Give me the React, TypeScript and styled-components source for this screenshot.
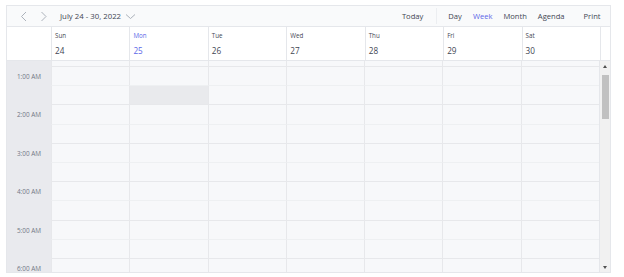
import styled, { createGlobalStyle } from "styled-components";

const GlobalStyle = createGlobalStyle`
  body {
    margin: 0;
    background: #ffffff;
    font-family: "Open Sans", "Noto Sans", sans-serif;
  }
`

const Scheduler = styled.div`
  margin: 5px 0 0 6px;
  width: 605px;
  border: 1px solid #e5e7eb;
  box-sizing: border-box;
  color: #3f4653;
`

const Toolbar = styled.div`
  height: 20px;
  display: flex;
  align-items: center;
  background: #f9fafb;
  border-bottom: 1px solid #e5e7eb;
  font-size: 7.6px;
  padding: 0 4px 0 7px;
`

const NavButton = styled.span`
  width: 20px;
  display: flex;
  justify-content: center;
  align-items: center;
  color: #a3a9b3;
`

const DateRange = styled.span`
  margin-left: 6px;
  display: flex;
  align-items: center;
  gap: 4px;
  font-size: 7.8px;
`

const DropIcon = styled.span`
  display: flex;
  color: #a3a9b3;
`

const Spacer = styled.div`
  flex: 1;
`

const ToolButton = styled.span<{ $active?: boolean; $gap?: number }>`
  padding: 0 5.5px;
  margin-left: ${props => props.$gap || 0}px;
  color: ${props => props.$active ? "#5b67e8" : "#3f4653"};
`

const Divider = styled.span`
  width: 1px;
  height: 16px;
  background: #eceef1;
  margin: 0 6px 0 7px;
`

const HeaderRow = styled.div`
  display: grid;
  grid-template-columns: 44px repeat(7, 1fr) 10px;
  height: 33px;
  border-bottom: 1px solid #e5e7eb;
`

const HeaderCell = styled.div<{ $today?: boolean }>`
  border-left: 1px solid #e5e7eb;
  padding: 4px 0 0 3px;
  color: ${props => props.$today ? "#5b67e8" : "#3f4653"};
  &:first-child {
    border-left: none;
  }
`

const DayName = styled.div`
  font-size: 6.2px;
  line-height: 9px;
`

const DayNumber = styled.div`
  font-size: 8.2px;
  line-height: 11px;
  margin-top: 5px;
`

const Body = styled.div`
  display: flex;
  height: 211px;
  overflow: hidden;
`

const Grid = styled.div`
  flex: 1;
  display: grid;
  grid-template-columns: 44px repeat(7, 1fr);
  grid-auto-rows: 19.2px;
  grid-template-rows: 6px;
  align-content: start;
`

const Gutter = styled.div<{ $span: number }>`
  grid-column: 1;
  grid-row: span ${props => props.$span};
  background: #e9eaee;
  font-size: 6.4px;
  line-height: 9px;
  color: #717784;
  text-align: center;
  padding-top: 5px;
  box-sizing: border-box;
`

const Slot = styled.div<{ $hour?: boolean; $selected?: boolean }>`
  background: ${props => props.$selected ? "#e9eaed" : "#f7f8fa"};
  border-left: 1px solid #e7e8eb;
  border-bottom: 1px solid ${props => props.$hour ? "#e7e8eb" : "#eef0f2"};
  box-sizing: border-box;
`

const ScrollTrack = styled.div`
  width: 10px;
  background: #f1f1f1;
  display: flex;
  flex-direction: column;
  align-items: center;
  border-left: 1px solid #e5e7eb;
`

const Arrow = styled.div<{ $down?: boolean }>`
  height: 10px;
  display: flex;
  align-items: center;
  justify-content: center;
  &::after {
    content: "";
    border-left: 2.5px solid transparent;
    border-right: 2.5px solid transparent;
    ${props => props.$down ? "border-top: 3px solid #505050;" : "border-bottom: 3px solid #505050;"}
  }
`

const Thumb = styled.div`
  width: 7px;
  height: 44px;
  background: #c1c1c1;
  margin-top: 4px;
`

const ScrollFill = styled.div`
  flex: 1;
`

const days = [
  { name: "Sun", num: 24 },
  { name: "Mon", num: 25, today: true },
  { name: "Tue", num: 26 },
  { name: "Wed", num: 27 },
  { name: "Thu", num: 28 },
  { name: "Fri", num: 29 },
  { name: "Sat", num: 30 },
]

const hours = ["1:00 AM", "2:00 AM", "3:00 AM", "4:00 AM", "5:00 AM", "6:00 AM"]

function Chevron({ dir }: { dir: "left" | "right" | "down" }) {
  const d = dir === "left" ? "M6 1 L1.5 5.5 L6 10" : dir === "right" ? "M1.5 1 L6 5.5 L1.5 10" : "M1 1.5 L5.5 5.5 L10 1.5"
  const w = dir === "down" ? 11 : 8
  const h = dir === "down" ? 7 : 11
  return (
    <svg width={w} height={h} viewBox={`0 0 ${w} ${h}`} fill="none" stroke="currentColor" strokeWidth="0.9">
      <path d={d} />
    </svg>
  )
}

function App() {
  const cells = []
  // partial slot at the top (scrolled)
  cells.push(<Gutter key="g0" $span={1} />)
  days.forEach((d, i) => cells.push(<Slot key={`p${i}`} $hour />))
  hours.forEach((h, hi) => {
    cells.push(<Gutter key={`g${h}`} $span={2}>{h}</Gutter>)
    for (let half = 0; half < 2; half++) {
      days.forEach((d, i) =>
        cells.push(
          <Slot key={`${hi}-${half}-${i}`} $hour={half === 1} $selected={hi === 0 && half === 1 && i === 1} />
        )
      )
    }
  })

  return (
    <>
      <GlobalStyle />
      <Scheduler>
        <Toolbar>
          <NavButton><Chevron dir="left" /></NavButton>
          <NavButton><Chevron dir="right" /></NavButton>
          <DateRange>
            July 24 - 30, 2022
            <DropIcon><Chevron dir="down" /></DropIcon>
          </DateRange>
          <Spacer />
          <ToolButton>Today</ToolButton>
          <Divider />
          <ToolButton>Day</ToolButton>
          <ToolButton $active>Week</ToolButton>
          <ToolButton>Month</ToolButton>
          <ToolButton>Agenda</ToolButton>
          <ToolButton $gap={8}>Print</ToolButton>
        </Toolbar>
        <HeaderRow>
          <HeaderCell />
          {days.map(d => (
            <HeaderCell key={d.name} $today={d.today}>
              <DayName>{d.name}</DayName>
              <DayNumber>{d.num}</DayNumber>
            </HeaderCell>
          ))}
          <HeaderCell />
        </HeaderRow>
        <Body>
          <Grid>{cells}</Grid>
          <ScrollTrack>
            <Arrow />
            <Thumb />
            <ScrollFill />
            <Arrow $down />
          </ScrollTrack>
        </Body>
      </Scheduler>
    </>
  )
}

export default App;
